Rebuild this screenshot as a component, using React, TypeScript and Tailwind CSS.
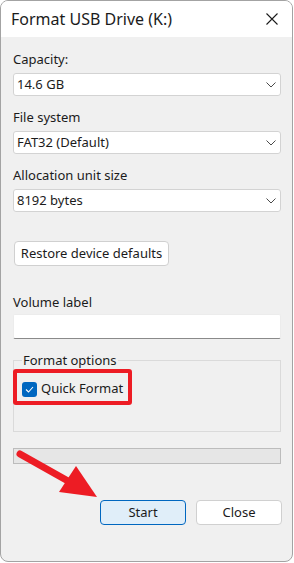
import React from 'react';

const font = { fontFamily: '"Noto Sans", "Open Sans", sans-serif' };

const Chevron = () => (
  <svg width="10" height="6" viewBox="0 0 10 6" className="shrink-0">
    <polyline points="0.5,0.5 5,5 9.5,0.5" fill="none" stroke="#4a4a4a" strokeWidth="1" />
  </svg>
);

const Select: React.FC<{ value: string }> = ({ value }) => (
  <div className="flex h-[23px] w-[268px] items-center justify-between rounded-[3px] border border-[#d3d3d3] bg-white pl-[3px] pr-[4px] text-[13px] leading-none text-[#1b1b1b]">
    <span>{value}</span>
    <Chevron />
  </div>
);

const Field: React.FC<{ label: string; value: string; first?: boolean }> = ({ label, value, first }) => (
  <div className={first ? '' : 'mt-[13px]'}>
    <div className="mb-[5px] text-[13px] leading-[17px] text-[#1b1b1b]">{label}</div>
    <Select value={value} />
  </div>
);

export default function App() {
  return (
    <div className="min-h-[563px] w-[294px] bg-white" style={font}>
      <div className="relative h-[562px] w-[293px] overflow-hidden rounded-[8px] border border-[#a3a3a3] bg-[#f0f0f0]">
        {/* title bar */}
        <div className="flex h-[36px] items-center justify-between bg-white pl-[10px] pr-[14px]">
          <span className="text-[16px] leading-none text-[#1b1b1b]">Format USB Drive (K:)</span>
          <svg width="12" height="12" viewBox="0 0 12 12">
            <path d="M0.5 0.5 L11.5 11.5 M11.5 0.5 L0.5 11.5" stroke="#1b1b1b" strokeWidth="1.1" />
          </svg>
        </div>

        <div className="pl-[12px] pt-[14px]">
          <Field label="Capacity:" value="14.6 GB" first />
          <Field label="File system" value="FAT32 (Default)" />
          <Field label="Allocation unit size" value="8192 bytes" />

          <button className="ml-[1px] mt-[29px] flex h-[25px] w-[155px] items-center justify-center rounded-[4px] border border-[#d0d0d0] bg-white text-[13px] text-[#1b1b1b]">
            Restore device defaults
          </button>

          <div className="mt-[28px] text-[13px] leading-[17px] text-[#1b1b1b]">Volume label</div>
          <div className="mt-[3px] h-[25px] w-[268px] rounded-[2px] border border-[#ececec] border-b-[#8a8a8a] bg-white" />

          <fieldset className="mt-[13px] w-[268px] border border-[#dadada] pb-[26px]">
            <legend className="ml-[8px] px-[1px] text-[13px] leading-[17px] text-[#1b1b1b]">Format options</legend>
            <div className="ml-[-1px] flex h-[36px] w-[119px] items-start gap-[4px] rounded-[3px] border-[4px] border-[#ed1c24] pl-[5px] pt-[9px]">
              <div className="flex h-[15px] w-[15px] items-center justify-center rounded-[3px] bg-[#0067c0]">
                <svg width="9" height="7" viewBox="0 0 9 7">
                  <polyline points="1,3.5 3.5,6 8,1" fill="none" stroke="white" strokeWidth="1.1" />
                </svg>
              </div>
              <span className="mt-[-2px] text-[13px] leading-[17px] text-[#1b1b1b]">Quick Format</span>
            </div>
          </fieldset>

          <div className="mt-[16px] h-[16px] w-[268px] border border-[#bcbcbc] bg-[#e6e6e6]" />

          <div className="mt-[36px] flex w-[269px] justify-end gap-[10px]">
            <button className="flex h-[25px] w-[86px] items-center justify-center rounded-[4px] border border-[#0067c0] bg-[#e0eef9] text-[13px] text-[#1b1b1b]">
              Start
            </button>
            <button className="flex h-[25px] w-[86px] items-center justify-center rounded-[4px] border border-[#d0d0d0] bg-white text-[13px] text-[#1b1b1b]">
              Close
            </button>
          </div>
        </div>

        {/* annotation arrow */}
        <svg className="pointer-events-none absolute left-[-1px] top-[-1px]" width="294" height="563" viewBox="0 0 294 563">
          <line x1="20" y1="454" x2="68" y2="481" stroke="#ed1c24" strokeWidth="7" strokeLinecap="round" />
          <polygon points="59,492 76,466 97,497" fill="#ed1c24" />
        </svg>
      </div>
    </div>
  );
}
